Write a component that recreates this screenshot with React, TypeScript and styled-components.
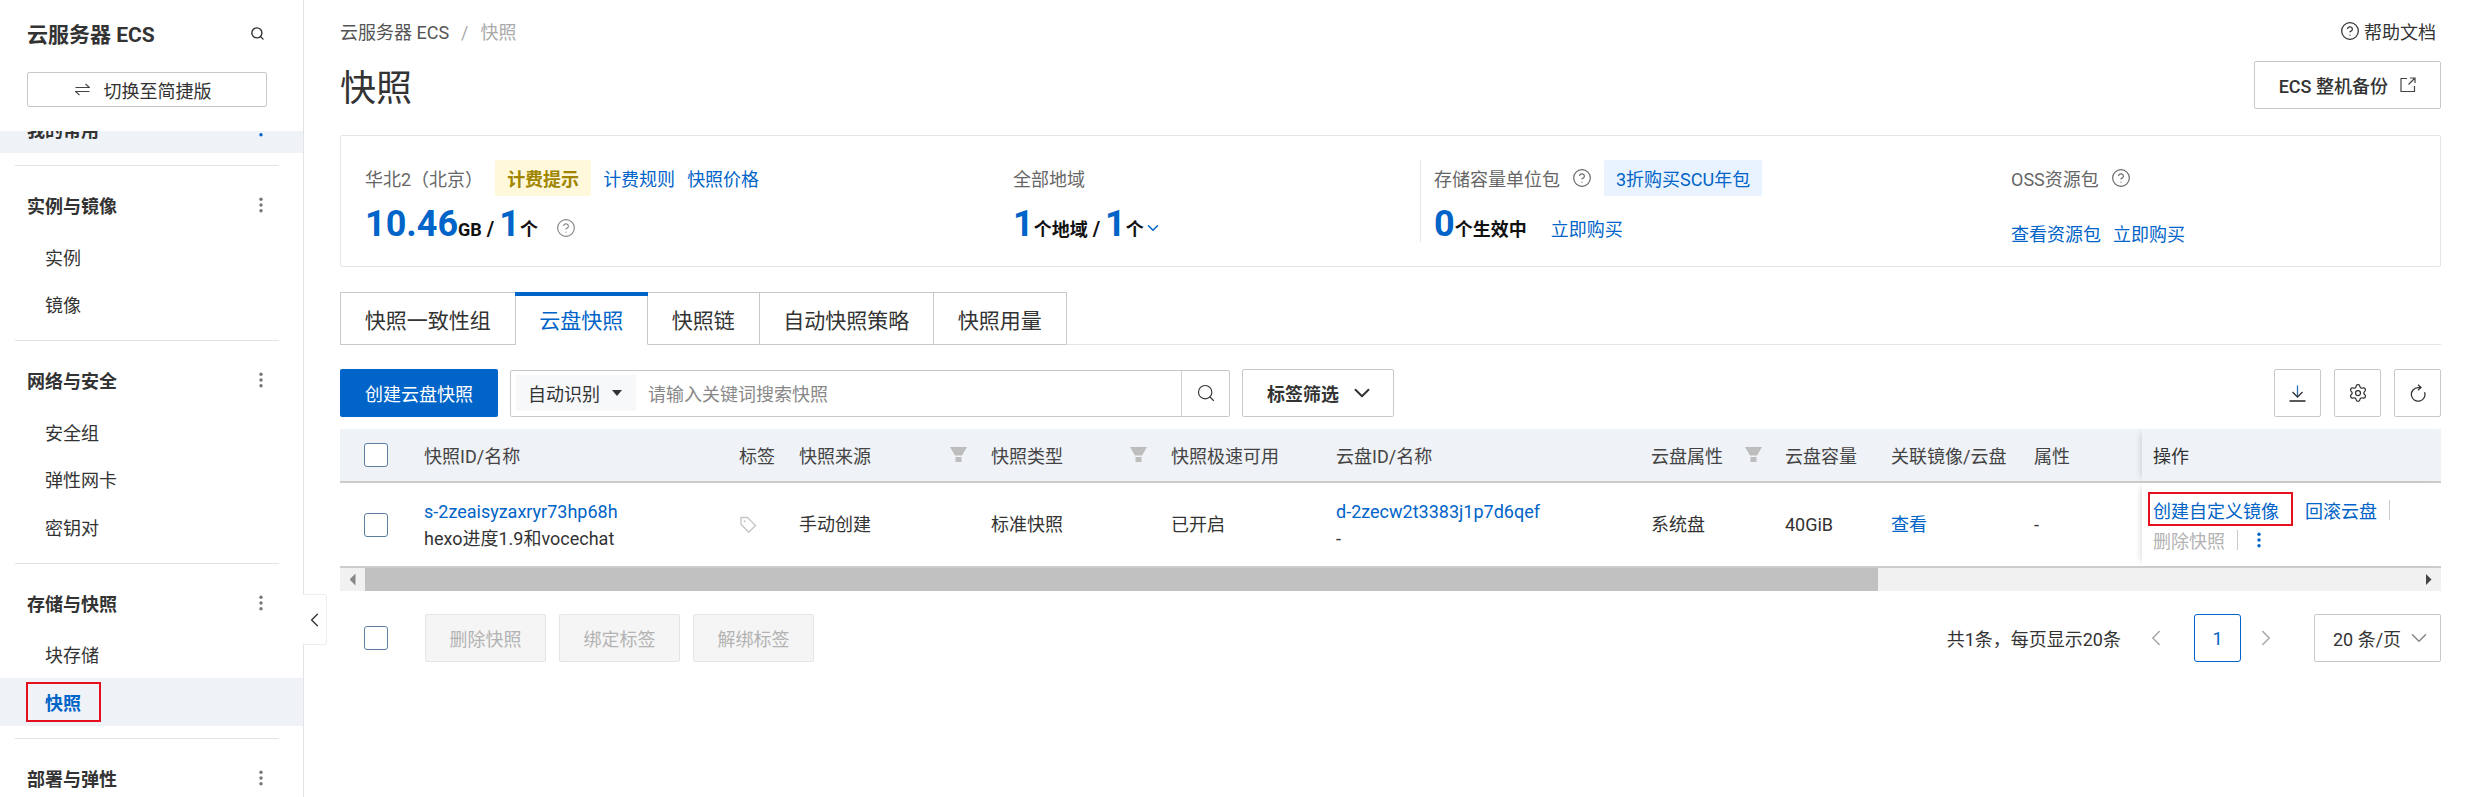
import styled, { createGlobalStyle } from 'styled-components'
import { ChevronDown, ChevronLeft, ChevronRight, CircleHelp, Search, Settings } from 'lucide-react'

const Blue = '#0064c8'
const FONT = 'Roboto, "Noto Sans CJK SC", "Noto Sans", sans-serif'
const COLUMNS = '84px 315px 60px 192px 180px 165px 315px 134px 106px 143px 108px 1fr'

const navGroups = [
  { title: '实例与镜像', items: ['实例', '镜像'] },
  { title: '网络与安全', items: ['安全组', '弹性网卡', '密钥对'] },
  { title: '存储与快照', items: ['块存储', '快照'] }
]

const tabs = ['快照一致性组', '云盘快照', '快照链', '自动快照策略', '快照用量']

const headers: { label: string; filter?: number }[] = [
  { label: '快照ID/名称' },
  { label: '标签' },
  { label: '快照来源', filter: 151 },
  { label: '快照类型', filter: 139 },
  { label: '快照极速可用' },
  { label: '云盘ID/名称' },
  { label: '云盘属性', filter: 94 },
  { label: '云盘容量' },
  { label: '关联镜像/云盘' },
  { label: '属性' }
]

const Dots = ({ color = '#777' }: { color?: string }) => (
  <svg width="6" height="16" viewBox="0 0 6 16" fill={color}>
    <circle cx="3" cy="2.2" r="1.7" />
    <circle cx="3" cy="8" r="1.7" />
    <circle cx="3" cy="13.8" r="1.7" />
  </svg>
)

const SwitchIcon = () => (
  <svg width="15" height="13" viewBox="0 0 15 13" fill="none" stroke="#444" strokeWidth="1.2">
    <path d="M0.5 4.5h14L10.5 1" />
    <path d="M14.5 8.5H0.5l4 3.6" />
  </svg>
)

const FilterIcon = () => (
  <svg width="17" height="15" viewBox="0 0 17 15" fill="#bdbdbd">
    <path d="M0 0h17l-5 8.5h-7z" />
    <rect x="5.5" y="10" width="6" height="5" />
  </svg>
)

const ShareIcon = () => (
  <svg width="16" height="16" viewBox="0 0 16 16" fill="none" stroke="#444" strokeWidth="1.2">
    <path d="M7 1.5H1v13h13.5V9" />
    <path d="M10 1h5v5M15 1L8.5 7.5" />
  </svg>
)

const TagIcon = () => (
  <svg width="18" height="18" viewBox="0 0 18 18" fill="none" stroke="#c4c4c4" strokeWidth="1.3">
    <path d="M2 1.5h6.5l8 8-6.8 6.8-7.7-8z" />
    <circle cx="5.6" cy="5.2" r="1" fill="#c4c4c4" stroke="none" />
  </svg>
)

const Caret = () => (
  <svg width="10" height="6" viewBox="0 0 10 6" fill="#333">
    <path d="M0 0h10L5 6z" />
  </svg>
)

const DownloadIcon = () => (
  <svg width="17" height="17" viewBox="0 0 17 17" fill="none" stroke="#333" strokeWidth="1.3">
    <path d="M8.5 0.5v11" stroke="#2b6cb0" />
    <path d="M3.5 7l5 5 5-5" />
    <path d="M0.5 16h16" strokeWidth="1.6" />
  </svg>
)

const RefreshIcon = () => (
  <svg width="16" height="18" viewBox="0 0 16 18" fill="none" stroke="#333" strokeWidth="1.3">
    <path d="M14.6 8.2A6.8 6.8 0 1 1 8 3.6h2.6" />
    <path d="M8 0.8l3 2.8-3 2.6" />
  </svg>
)

const App = () => {
  return (
    <Page>
      <GlobalStyle />
      <Sidebar>
        <SideHead>
          <SideTitleRow>
            <SideTitle>云服务器 ECS</SideTitle>
            <Search size={15} color="#333" strokeWidth={2.2} />
          </SideTitleRow>
          <SwitchButton>
            <SwitchIcon />
            切换至简捷版
          </SwitchButton>
        </SideHead>
        <Nav>
          <ClippedRow>
            <NavTitle>我的常用</NavTitle>
            <Dots color={Blue} />
          </ClippedRow>
          {navGroups.map((g) => (
            <NavGroup key={g.title}>
              <NavHead>
                <NavTitle>{g.title}</NavTitle>
                <Dots />
              </NavHead>
              {g.items.map((item) => (
                <NavItem key={item} $active={item === '快照'}>
                  {item === '快照' ? <NavMark>{item}</NavMark> : item}
                </NavItem>
              ))}
            </NavGroup>
          ))}
          <NavGroup>
            <NavHead>
              <NavTitle>部署与弹性</NavTitle>
              <Dots />
            </NavHead>
          </NavGroup>
        </Nav>
        <CollapseHandle>
          <ChevronLeft size={26} color="#333" strokeWidth={1.4} />
        </CollapseHandle>
      </Sidebar>

      <Main>
        <TopRow>
          <Crumbs>
            云服务器 ECS<CrumbSep>/</CrumbSep>
            <CrumbNow>快照</CrumbNow>
          </Crumbs>
          <Help>
            <CircleHelp size={20} strokeWidth={1.5} />
            帮助文档
          </Help>
        </TopRow>
        <TitleRow>
          <PageTitle>快照</PageTitle>
          <BackupButton>
            ECS 整机备份
            <ShareIcon />
          </BackupButton>
        </TitleRow>

        <Summary>
          <StatCol>
            <StatHead>
              <Muted>华北2（北京）</Muted>
              <Badge $tone="warn">计费提示</Badge>
              <Link>计费规则</Link>
              <Link>快照价格</Link>
            </StatHead>
            <StatBody>
              <Big>10.46</Big>
              <Unit>GB</Unit>
              <Slash>/</Slash>
              <Big>1</Big>
              <Unit>个</Unit>
              <HelpMark>
                <CircleHelp size={20} strokeWidth={1.4} />
              </HelpMark>
            </StatBody>
          </StatCol>
          <StatCol>
            <StatHead>
              <Muted>全部地域</Muted>
            </StatHead>
            <StatBody>
              <Big>1</Big>
              <Unit>个地域</Unit>
              <Slash>/</Slash>
              <Big>1</Big>
              <Unit>个</Unit>
              <ChevronDown size={18} color={Blue} strokeWidth={2} />
            </StatBody>
          </StatCol>
          <StatCol $divided>
            <StatHead>
              <Muted>存储容量单位包</Muted>
              <CircleHelp size={20} color="#666" strokeWidth={1.4} />
              <Badge $tone="info">3折购买SCU年包</Badge>
            </StatHead>
            <StatBody>
              <Big>0</Big>
              <Unit>个生效中</Unit>
              <BuyLink>立即购买</BuyLink>
            </StatBody>
          </StatCol>
          <StatCol>
            <StatHead>
              <Muted>OSS资源包</Muted>
              <CircleHelp size={20} color="#666" strokeWidth={1.4} />
            </StatHead>
            <LinkBody>
              <Link>查看资源包</Link>
              <Link>立即购买</Link>
            </LinkBody>
          </StatCol>
        </Summary>

        <Tabs>
          {tabs.map((t) => (
            <Tab key={t} $active={t === '云盘快照'}>
              {t}
            </Tab>
          ))}
        </Tabs>

        <Toolbar>
          <Primary>创建云盘快照</Primary>
          <SearchBox>
            <ScopeSelect>
              自动识别
              <Caret />
            </ScopeSelect>
            <Placeholder>请输入关键词搜索快照</Placeholder>
            <SearchButton>
              <Search size={20} color="#333" strokeWidth={1.4} />
            </SearchButton>
          </SearchBox>
          <TagFilter>
            标签筛选
            <ChevronDown size={26} color="#333" strokeWidth={1.8} />
          </TagFilter>
          <ToolIcons>
            <IconButton>
              <DownloadIcon />
            </IconButton>
            <IconButton>
              <Settings size={20} color="#333" strokeWidth={1.5} />
            </IconButton>
            <IconButton>
              <RefreshIcon />
            </IconButton>
          </ToolIcons>
        </Toolbar>

        <Table>
          <HeadRow>
            <CheckCell>
              <Checkbox />
            </CheckCell>
            {headers.map((h) => (
              <HeadCell key={h.label}>
                {h.label}
                {h.filter && (
                  <FilterSlot $left={h.filter}>
                    <FilterIcon />
                  </FilterSlot>
                )}
              </HeadCell>
            ))}
            <OpHead>操作</OpHead>
          </HeadRow>
          <BodyRow>
            <CheckCell>
              <Checkbox />
            </CheckCell>
            <Cell>
              <Link>s-2zeaisyzaxryr73hp68h</Link>
              <CellLine>hexo进度1.9和vocechat</CellLine>
            </Cell>
            <Cell>
              <TagIcon />
            </Cell>
            <Cell>手动创建</Cell>
            <Cell>标准快照</Cell>
            <Cell>已开启</Cell>
            <Cell>
              <Link>d-2zecw2t3383j1p7d6qef</Link>
              <CellLine>-</CellLine>
            </Cell>
            <Cell>系统盘</Cell>
            <Cell>40GiB</Cell>
            <Cell>
              <Link>查看</Link>
            </Cell>
            <Cell>-</Cell>
            <OpCell>
              <OpLine>
                <OpMark>
                  <Link>创建自定义镜像</Link>
                </OpMark>
                <Link>回滚云盘</Link>
                <OpSep />
              </OpLine>
              <OpLine>
                <Disabled>删除快照</Disabled>
                <OpSep />
                <MoreDots>
                  <Dots color={Blue} />
                </MoreDots>
              </OpLine>
            </OpCell>
          </BodyRow>
          <Scrollbar>
            <ScrollArrow $dir="left" />
            <ScrollThumb />
            <ScrollArrow $dir="right" />
          </Scrollbar>
        </Table>

        <Footer>
          <FooterCheck>
            <Checkbox />
          </FooterCheck>
          <GhostButton>删除快照</GhostButton>
          <GhostButton>绑定标签</GhostButton>
          <GhostButton>解绑标签</GhostButton>
          <Pager>
            <PagerText>共1条，每页显示20条</PagerText>
            <ChevronLeft size={26} color="#aaa" strokeWidth={1.5} />
            <PageBox>1</PageBox>
            <ChevronRight size={26} color="#aaa" strokeWidth={1.5} />
            <PageSize>
              20 条/页
              <ChevronDown size={26} color="#888" strokeWidth={1.4} />
            </PageSize>
          </Pager>
        </Footer>
      </Main>
    </Page>
  )
}

export default App

const GlobalStyle = createGlobalStyle`
  html, body {
    margin: 0;
    height: 100%;
    overflow: hidden;
    background: #fff;
  }
  body {
    font-family: ${FONT};
    font-size: 18px;
    color: #333;
  }
  * {
    box-sizing: border-box;
  }
`
const Page = styled.div`
  display: flex;
  height: 797px;
`
const Sidebar = styled.aside`
  position: relative;
  flex: 0 0 304px;
  display: flex;
  flex-direction: column;
  border-right: 1px solid #e3e3e3;
`
const SideHead = styled.div`
  flex: 0 0 131px;
  padding: 16px 27px 0;
`
const SideTitleRow = styled.div`
  display: flex;
  align-items: center;
  justify-content: space-between;
  height: 34px;
  padding-right: 11px;
`
const SideTitle = styled.div`
  font-size: 21px;
  font-weight: 700;
  color: #333;
`
const SwitchButton = styled.div`
  display: flex;
  align-items: center;
  justify-content: center;
  gap: 14px;
  width: 240px;
  height: 35px;
  margin-top: 22px;
  padding-right: 8px;
  border: 1px solid #c8c8c8;
  border-radius: 2px;
`
const Nav = styled.nav`
  flex: 1;
  overflow: hidden;
`
const ClippedRow = styled.div`
  display: flex;
  align-items: center;
  justify-content: space-between;
  height: 48px;
  margin-top: -26px;
  padding: 0 39px 0 27px;
  background: #eff2f7;
`
const NavTitle = styled.div`
  font-weight: 700;
  color: #333;
`
const NavGroup = styled.div`
  margin: 12px 24px 0 15px;
  padding-top: 15px;
  border-top: 1px solid #e3e3e3;
`
const NavHead = styled.div`
  display: flex;
  align-items: center;
  justify-content: space-between;
  height: 48px;
  margin-bottom: 4px;
  padding: 0 15px 0 12px;
`
const NavItem = styled.div<{ $active?: boolean }>`
  display: flex;
  align-items: center;
  height: 47.5px;
  margin: 0 -24px 0 -15px;
  padding-left: 45px;
  background: ${(props) => (props.$active ? '#eff2f7' : 'transparent')};
  color: ${(props) => (props.$active ? Blue : '#333')};
  font-weight: ${(props) => (props.$active ? 700 : 400)};
`
const NavMark = styled.span`
  position: relative;
  display: inline-block;

  &::after {
    content: '';
    position: absolute;
    inset: -7px -20px -7px -19px;
    border: 2px solid #e60f1e;
  }
`
const OpMark = styled.span`
  position: relative;
  display: inline-block;
  margin-right: 14px;

  &::after {
    content: '';
    position: absolute;
    inset: -5px -14px -3px -5px;
    border: 2px solid #e60f1e;
  }
`
const CollapseHandle = styled.div`
  position: absolute;
  top: 594px;
  left: 303px;
  display: flex;
  align-items: center;
  justify-content: center;
  width: 24px;
  height: 51px;
  background: #fff;
  border: 1px solid #eee;
  border-left: none;
  border-radius: 0 3px 3px 0;
`
const Main = styled.main`
  flex: 1;
  min-width: 0;
  padding: 18px 24px 0 36px;
`
const TopRow = styled.div`
  display: flex;
  align-items: center;
  justify-content: space-between;
  height: 26px;
`
const Crumbs = styled.div`
  color: #555;
`
const CrumbSep = styled.span`
  margin: 0 12px;
  color: #aaa;
`
const CrumbNow = styled.span`
  color: #aaa;
`
const Help = styled.div`
  display: flex;
  align-items: center;
  gap: 4px;
  padding-right: 5px;
`
const TitleRow = styled.div`
  display: flex;
  align-items: center;
  justify-content: space-between;
  height: 48px;
  margin-top: 17px;
`
const PageTitle = styled.h1`
  margin: 0;
  font-size: 36px;
  font-weight: 400;
  color: #333;
`
const BackupButton = styled.div`
  display: flex;
  align-items: center;
  gap: 12px;
  height: 48px;
  padding: 0 24px;
  border: 1px solid #c8c8c8;
  border-radius: 2px;
  font-weight: 500;
`
const Summary = styled.section`
  display: grid;
  grid-template-columns: 648px 407px 591px 1fr;
  height: 132px;
  margin-top: 26px;
  padding: 24px 0 0 24px;
  border: 1px solid #e5e5e5;
  border-radius: 2px;
`
const StatCol = styled.div<{ $divided?: boolean }>`
  height: 82px;
  ${(props) => props.$divided && 'padding-left: 13px; border-left: 1px solid #e5e5e5;'}
`
const StatHead = styled.div`
  display: flex;
  align-items: center;
  gap: 12px;
  height: 36px;
`
const StatBody = styled.div`
  display: flex;
  align-items: baseline;
  height: 46px;
  padding-top: 3px;
  line-height: 50px;

  & > svg {
    align-self: center;
    margin-top: 14px;
  }
`
const LinkBody = styled.div`
  display: flex;
  align-items: center;
  gap: 12px;
  height: 46px;
  padding-top: 28px;
`
const Muted = styled.span`
  color: #666;
`
const Badge = styled.span<{ $tone: 'warn' | 'info' }>`
  display: inline-flex;
  align-items: center;
  height: 36px;
  padding: 0 12px;
  background: ${(props) => (props.$tone === 'warn' ? '#fff8db' : '#e8f3ff')};
  color: ${(props) => (props.$tone === 'warn' ? '#a08600' : Blue)};
  font-weight: ${(props) => (props.$tone === 'warn' ? 700 : 400)};
  border-radius: 2px;
`
const Link = styled.span`
  color: ${Blue};
`
const BuyLink = styled(Link)`
  margin-left: 24px;
`
const Big = styled.span`
  font-size: 36px;
  font-weight: 700;
  color: ${Blue};
`
const Unit = styled.span`
  font-weight: 700;
  color: #111;
`
const Slash = styled.span`
  margin: 0 5px;
  font-size: 20px;
  font-weight: 700;
  color: #111;
`
const HelpMark = styled.span`
  display: inline-flex;
  align-self: center;
  margin: 14px 0 0 18px;
  color: #888;
`
const Tabs = styled.div`
  display: flex;
  height: 53px;
  margin-top: 25px;
  border-bottom: 1px solid #e5e5e5;
`
const Tab = styled.div<{ $active?: boolean }>`
  position: relative;
  display: flex;
  align-items: center;
  height: 53px;
  padding: 0 23.75px;
  border: 1px solid #c8c8c8;
  border-left-width: 0;
  font-size: 21px;
  color: ${(props) => (props.$active ? Blue : '#333')};
  ${(props) => props.$active && 'border-bottom-color: #fff;'}

  &:first-child {
    border-left-width: 1px;
  }

  ${(props) =>
    props.$active &&
    `&::before {
      content: '';
      position: absolute;
      top: -1px;
      left: -1px;
      right: -1px;
      height: 4px;
      background: ${Blue};
    }`}
`
const Toolbar = styled.div`
  display: flex;
  align-items: center;
  height: 48px;
  margin-top: 24px;
`
const Primary = styled.div`
  display: flex;
  align-items: center;
  height: 48px;
  padding: 0 25px;
  background: ${Blue};
  border-radius: 2px;
  color: #fff;
`
const SearchBox = styled.div`
  display: flex;
  align-items: center;
  width: 720px;
  height: 47px;
  margin-left: 12px;
  padding-left: 5px;
  border: 1px solid #c8c8c8;
  border-radius: 2px;
`
const ScopeSelect = styled.div`
  display: flex;
  align-items: center;
  gap: 12px;
  width: 120px;
  height: 36px;
  padding-left: 12px;
  background: #f7f8fa;
`
const Placeholder = styled.div`
  flex: 1;
  padding-left: 12px;
  color: #888;
`
const SearchButton = styled.div`
  display: flex;
  align-items: center;
  justify-content: center;
  width: 48px;
  height: 100%;
  border-left: 1px solid #d0d0d0;
`
const TagFilter = styled.div`
  display: flex;
  align-items: center;
  gap: 10px;
  width: 152px;
  height: 48px;
  margin-left: 12px;
  padding-left: 24px;
  border: 1px solid #c8c8c8;
  border-radius: 2px;
  font-weight: 700;
`
const ToolIcons = styled.div`
  display: flex;
  gap: 13px;
  margin-left: auto;
`
const IconButton = styled.div`
  display: flex;
  align-items: center;
  justify-content: center;
  width: 47px;
  height: 48px;
  border: 1px solid #c8c8c8;
  border-radius: 2px;
`
const Table = styled.div`
  margin-top: 12px;
`
const HeadRow = styled.div`
  display: grid;
  grid-template-columns: ${COLUMNS};
  height: 54px;
  background: #eff2f7;
  border-bottom: 2px solid #ccc;
`
const BodyRow = styled.div`
  display: grid;
  grid-template-columns: ${COLUMNS};
  height: 85px;
  border-bottom: 2px solid #ccc;
`
const CheckCell = styled.div`
  display: flex;
  align-items: center;
  padding-left: 24px;
`
const Checkbox = styled.span`
  display: block;
  width: 24px;
  height: 24px;
  background: #fff;
  border: 1px solid #5f7d9f;
  border-radius: 3px;
`
const HeadCell = styled.div`
  position: relative;
  display: flex;
  align-items: center;
  color: #444;
`
const FilterSlot = styled.span<{ $left: number }>`
  position: absolute;
  top: 18px;
  left: ${(props) => props.$left}px;
  line-height: 0;
`
const Cell = styled.div`
  display: flex;
  flex-direction: column;
  justify-content: center;
  align-items: flex-start;
  line-height: 27px;
`
const CellLine = styled.div`
  color: #333;
`
const OpHead = styled.div`
  display: flex;
  align-items: center;
  padding-left: 11px;
  box-shadow: -5px 0 6px -4px rgba(0, 0, 0, 0.15);
`
const OpCell = styled(OpHead)`
  flex-direction: column;
  justify-content: center;
  align-items: flex-start;
  gap: 3px;
`
const OpLine = styled.div`
  display: flex;
  align-items: center;
  height: 27px;
  gap: 12px;
`
const OpSep = styled.span`
  width: 1px;
  height: 20px;
  background: #c8c8c8;
`
const MoreDots = styled.span`
  display: flex;
  margin-left: 6px;
`
const Disabled = styled.span`
  color: #b3b3b3;
`
const Scrollbar = styled.div`
  display: flex;
  align-items: center;
  height: 23px;
  background: #f1f1f1;
`
const ScrollArrow = styled.span<{ $dir: 'left' | 'right' }>`
  flex: 0 0 25px;
  display: flex;
  justify-content: center;

  &::before {
    content: '';
    width: 6px;
    height: 12px;
    background: ${(props) => (props.$dir === 'left' ? '#888' : '#444')};
    clip-path: ${(props) =>
      props.$dir === 'left' ? 'polygon(100% 0, 100% 100%, 0 50%)' : 'polygon(0 0, 100% 50%, 0 100%)'};
  }
`
const ScrollThumb = styled.span`
  width: 1513px;
  height: 100%;
  margin-right: auto;
  background: #c1c1c1;
`
const Footer = styled.div`
  display: flex;
  align-items: center;
  gap: 13px;
  height: 48px;
  margin-top: 23px;
`
const FooterCheck = styled.div`
  width: 72px;
  padding-left: 24px;
`
const GhostButton = styled.div`
  display: flex;
  align-items: center;
  justify-content: center;
  width: 121px;
  height: 48px;
  background: #f5f5f5;
  border: 1px solid #e5e5e5;
  border-radius: 2px;
  color: #b3b3b3;
`
const Pager = styled.div`
  display: flex;
  align-items: center;
  margin-left: auto;
`
const PagerText = styled.span`
  margin-right: 22px;
`
const PageBox = styled.div`
  display: flex;
  align-items: center;
  justify-content: center;
  width: 47px;
  height: 48px;
  margin: 0 12px 0 25px;
  border: 1px solid ${Blue};
  border-radius: 3px;
  color: ${Blue};
`
const PageSize = styled.div`
  display: flex;
  align-items: center;
  gap: 5px;
  width: 127px;
  height: 48px;
  margin-left: 35px;
  padding-left: 18px;
  border: 1px solid #c8c8c8;
  border-radius: 2px;
`
